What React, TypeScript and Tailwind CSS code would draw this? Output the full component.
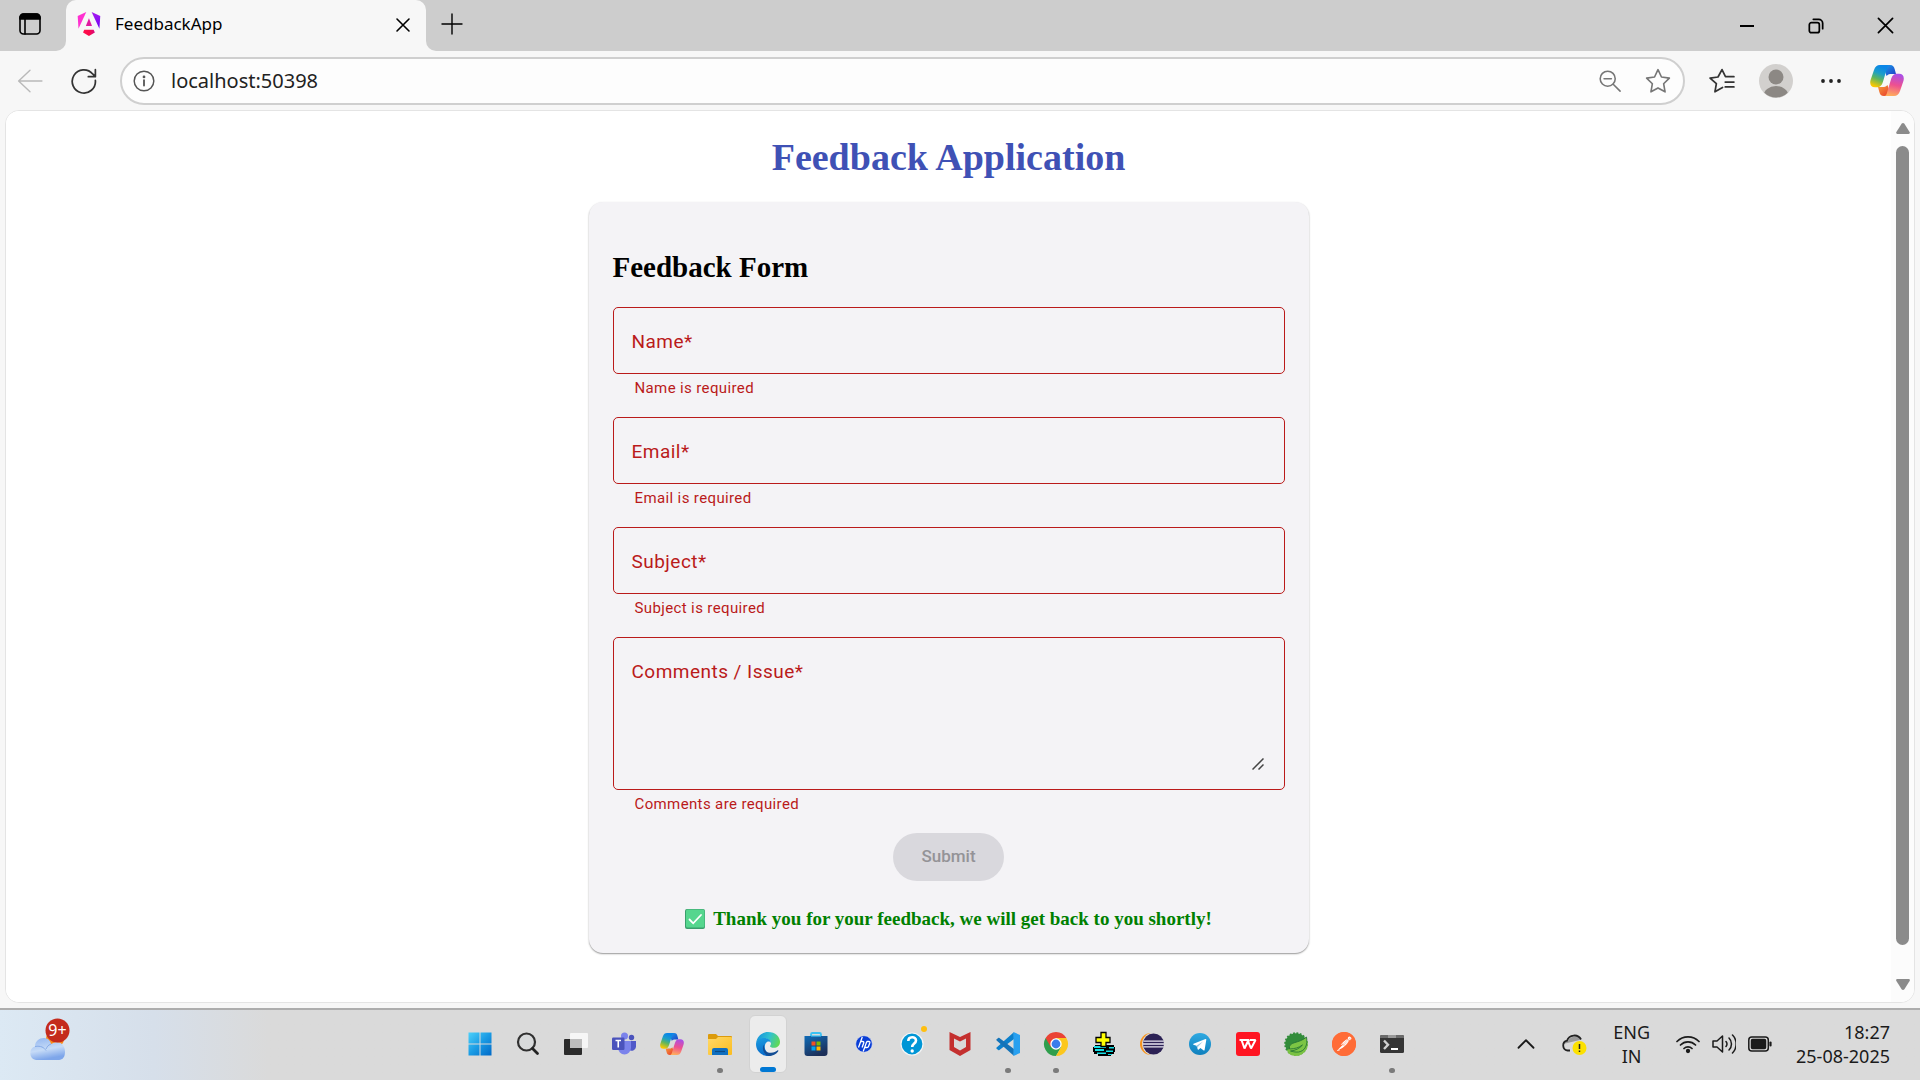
import type { ReactNode } from "react";
import { SiPostman } from "react-icons/si";

function AngularLogo() {
  return (
    <svg viewBox="0 0 223 236" className="h-6 w-6 shrink-0" aria-hidden="true">
      <defs>
        <linearGradient id="ngWing" x1="0" y1="0" x2="0" y2="1">
          <stop offset="0" stopColor="#a81bf0" />
          <stop offset="1" stopColor="#6c00f5" />
        </linearGradient>
        <linearGradient id="ngBase" x1="0" y1="0" x2="1" y2="0">
          <stop offset="0" stopColor="#ff0f4f" />
          <stop offset="0.5" stopColor="#fb0a48" />
          <stop offset="1" stopColor="#d60a80" />
        </linearGradient>
      </defs>
      <path d="M222.077 39.192l-8.019 125.923L137.387 0z" fill="url(#ngWing)" />
      <path d="M168.972 202.017l-57.933 33.056-57.934-33.056 11.783-28.556h92.301z" fill="url(#ngBase)" />
      <path d="M111.039 62.675l30.357 73.803H80.681z" fill="#e01aa0" />
      <path d="M7.937 165.115L0 39.192 84.69 0z" fill="#ff31d0" />
    </svg>
  );
}

function CopilotLogo({ id, className }: { id: string; className: string }) {
  return (
    <svg viewBox="0 0 34 31" className={className} aria-hidden="true">
      <defs>
        <linearGradient id={`${id}a`} x1="0.7" y1="0" x2="0.35" y2="1">
          <stop offset="0.1" stopColor="#0a86e8" />
          <stop offset="0.4" stopColor="#1c9fc8" />
          <stop offset="0.65" stopColor="#5cb560" />
          <stop offset="1" stopColor="#fbc800" />
        </linearGradient>
        <linearGradient id={`${id}b`} x1="0.6" y1="0" x2="0.4" y2="1">
          <stop offset="0" stopColor="#a94fe8" />
          <stop offset="0.5" stopColor="#ee5090" />
          <stop offset="1" stopColor="#ffae5c" />
        </linearGradient>
        <linearGradient id={`${id}c`} x1="0" y1="0" x2="1" y2="1">
          <stop offset="0" stopColor="#1aa2ee" />
          <stop offset="1" stopColor="#1f3bc4" />
        </linearGradient>
        <linearGradient id={`${id}d`} x1="0" y1="0" x2="1" y2="1">
          <stop offset="0" stopColor="#f6a03a" />
          <stop offset="1" stopColor="#e8322c" />
        </linearGradient>
      </defs>
      <path d="M13 0h7c3 0 4 1.500 4.800 4.500L26 9h-4c-2.500 0-4 .2-5.500 2z" fill={`url(#${id}c)`} />
      <path d="M21 31h-7c-3 0-4-1.500-4.800-4.500L8 22h4c2.500 0 4-.2 5.500-2z" fill={`url(#${id}d)`} />
      <path d="M10 0h10c-2 0-2.500 1.500-3.200 4L13.200 16c-1.300 4.500-3 6.300-6.500 6.300H5c-4 0-5.500-3-4.500-7L4 5c1.200-3.500 3-5 6-5z" fill={`url(#${id}a)`} />
      <path d="M24 31H14c2 0 2.500-1.500 3.200-4L20.800 15c1.300-4.500 3-6.300 6.500-6.300H29c4 0 5.500 3 4.500 7L30 26c-1.200 3.500-3 5-6 5z" fill={`url(#${id}b)`} />
    </svg>
  );
}

function Line({ size, children, width = 1.3 }: { size: string; children: ReactNode; width?: number }) {
  return (
    <svg
      viewBox="0 0 24 24"
      className={size}
      fill="none"
      stroke="currentColor"
      strokeWidth={width}
      strokeLinecap="round"
      strokeLinejoin="round"
      aria-hidden="true"
    >
      {children}
    </svg>
  );
}

function TabStrip() {
  return (
    <header className="flex h-[51px] shrink-0 bg-[#cdcdcd] text-black">
      <div className="flex w-[66px] items-center bg-[#f7f7f7]">
        <div className="flex h-full w-full items-center rounded-br-[10px] bg-[#cdcdcd] pb-1 pl-[18px]">
          <button aria-label="Tab actions">
            <Line size="size-6" width={1.6}>
              <rect x="2" y="2" width="20" height="20" rx="3.500" />
              <path d="M2 7V5.500A3.500 3.500 0 0 1 5.500 2h13A3.500 3.500 0 0 1 22 5.500V7z" fill="currentColor" />
              <path d="M7 7v15" />
            </Line>
          </button>
        </div>
      </div>
      <div className="bg-[#cdcdcd]">
        <div className="flex h-full w-[360px] items-center rounded-t-[10px] bg-[#f7f7f7] pr-[11px] pb-1 pl-[11px]">
          <AngularLogo />
          <span className="ml-[14px] flex-1 text-[17px]">FeedbackApp</span>
          <button aria-label="Close tab" className="mt-0.5 p-1">
            <Line size="size-4" width={2.4}>
              <path d="M3 3l18 18M21 3L3 21" />
            </Line>
          </button>
        </div>
      </div>
      <div className="flex flex-1 bg-[#f7f7f7]">
        <div className="flex flex-1 items-center rounded-bl-[10px] bg-[#cdcdcd] pl-[14px]">
          <button aria-label="New tab" className="mb-1">
            <Line size="size-6" width={1.4}>
              <path d="M12 2v20M2 12h20" />
            </Line>
          </button>
          <div className="ml-auto flex items-center pr-[26px]">
            <button aria-label="Minimize" className="mr-[53px]">
              <Line size="size-4" width={3}>
                <path d="M1.500 12h21" strokeLinecap="butt" />
              </Line>
            </button>
            <button aria-label="Restore" className="mr-[53px]">
              <Line size="size-4" width={2.6}>
                <rect x="2" y="7" width="15" height="15" rx="3" />
                <path d="M8 2h8a6 6 0 0 1 6 6v8" />
              </Line>
            </button>
            <button aria-label="Close">
              <Line size="size-[17px]" width={2.4}>
                <path d="M2 2l20 20M22 2L2 22" />
              </Line>
            </button>
          </div>
        </div>
      </div>
    </header>
  );
}

const starPath = "M12 1.500l3.200 6.800 7.300 1-5.300 5.200 1.300 7.500L12 18.400 5.500 22l1.300-7.500L1.500 9.300l7.300-1z";

function Toolbar() {
  return (
    <div className="flex h-[59px] shrink-0 items-center bg-[#f7f7f7] pr-4 pl-[17px] text-[#333]">
      <button aria-label="Back" className="text-[#b9b9b9]">
        <Line size="size-[26px]">
          <path d="M23 12H2M12 2L1.500 12 12 22" />
        </Line>
      </button>
      <button aria-label="Refresh" className="ml-7">
        <Line size="size-[26px]" width={1.6}>
          <path d="M22.500 11.500A10.700 10.700 0 1 1 20 5.500l2.200 2.200M22.500 1.500v6.500H16" />
        </Line>
      </button>
      <div className="ml-[23px] flex h-12 flex-1 items-center rounded-full border-2 border-[#cfcfcf] bg-[#fdfdfd] pr-3 pl-[11px]">
        <button aria-label="Site information" className="text-[#555]">
          <Line size="size-[22px]" width={1.6}>
            <circle cx="12" cy="12" r="10.700" />
            <path d="M12 11v6" strokeWidth="2" />
            <circle cx="12" cy="7.500" r="0.700" fill="currentColor" />
          </Line>
        </button>
        <input
          aria-label="Address"
          defaultValue="localhost:50398"
          className="ml-4 min-w-0 flex-1 bg-transparent text-[20px] text-[#222] outline-none"
        />
        <button aria-label="Zoom" className="text-[#767676]">
          <Line size="size-[22px]" width={1.7}>
            <circle cx="9.500" cy="9.500" r="8.200" />
            <path d="M5.500 9.500h8M15.500 15.500l7.500 7.500" />
          </Line>
        </button>
        <button aria-label="Add to favorites" className="ml-6 text-[#767676]">
          <Line size="size-[26px]" width={1.5}>
            <path d={starPath} />
          </Line>
        </button>
      </div>
      <button aria-label="Favorites" className="ml-6">
        <Line size="size-[26px]" width={1.6}>
          <path d="M12.500 18L5.500 22l1.300-7.500L1 9.300l7.300-1L12 1.500l3.200 6.500H23M15 13h8M15 17.500h8" />
        </Line>
      </button>
      <button aria-label="Profile" className="ml-6">
        <svg viewBox="0 0 34 34" className="size-[34px]" aria-hidden="true">
          <defs>
            <clipPath id="avatarClip">
              <circle cx="17" cy="17" r="16.500" />
            </clipPath>
          </defs>
          <circle cx="17" cy="17" r="17" fill="#d2d0ce" />
          <g clipPath="url(#avatarClip)" fill="#8c8884">
            <circle cx="17" cy="13" r="7.500" />
            <ellipse cx="17" cy="32" rx="12.500" ry="10" />
          </g>
        </svg>
      </button>
      <button aria-label="Settings and more" className="ml-7 text-[#222]">
        <svg viewBox="0 0 20 4" className="h-1 w-5" fill="currentColor" aria-hidden="true">
          <circle cx="2" cy="2" r="1.900" />
          <circle cx="10" cy="2" r="1.900" />
          <circle cx="18" cy="2" r="1.900" />
        </svg>
      </button>
      <button aria-label="Copilot" className="ml-[29px]">
        <CopilotLogo id="cpTool" className="h-[31px] w-[34px]" />
      </button>
    </div>
  );
}

function Field({ id, label, error, multiline }: { id: string; label: string; error: string; multiline?: boolean }) {
  return (
    <div className="mb-[15px]">
      <div className="relative grid rounded-[5px] border border-[#ba1a1a]">
        <label
          htmlFor={id}
          className="pointer-events-none col-start-1 row-start-1 px-[18px] pt-[22px] text-[19px] leading-6 tracking-wide text-[#ba1a1a]"
        >
          {label}*
        </label>
        {multiline ? (
          <>
            <textarea
              id={id}
              rows={4}
              className="col-start-1 row-start-1 h-[151px] resize-none bg-transparent px-[18px] pt-[22px] text-[19px] leading-6 outline-none"
            />
            <svg
              viewBox="0 0 12 12"
              className="absolute right-5 bottom-[19px] size-3"
              stroke="#444"
              strokeWidth="1.500"
              aria-hidden="true"
            >
              <path d="M0.500 11.500l11-11M6.500 11.500l5-5" />
            </svg>
          </>
        ) : (
          <input
            id={id}
            className="col-start-1 row-start-1 h-[65px] bg-transparent px-[18px] text-[19px] outline-none"
          />
        )}
      </div>
      <p className="px-[22px] text-[15px] leading-7 tracking-wide text-[#ba1a1a]">{error}</p>
    </div>
  );
}

function FeedbackPage() {
  return (
    <main className="flex min-w-0 flex-1 flex-col items-center overflow-hidden bg-white pt-[23px]">
      <h1 className="font-['Liberation_Serif',serif] text-[38px] leading-[46px] font-bold text-[#3f51b5]">
        Feedback Application
      </h1>
      <form className="mt-[22px] w-full max-w-[720px] rounded-[14px] bg-[#f4f3f6] px-6 pt-[47px] pb-[22px] font-[Roboto,sans-serif] shadow-[0_1px_2px_#0000004d,0_1px_1px_#00000024]">
        <h2 className="mb-[22px] font-['Liberation_Serif',serif] text-[29px] leading-9 font-bold text-black">
          Feedback Form
        </h2>
        <Field id="name" label="Name" error="Name is required" />
        <Field id="email" label="Email" error="Email is required" />
        <Field id="subject" label="Subject" error="Subject is required" />
        <Field id="comments" label="Comments / Issue" error="Comments are required" multiline />
        <div className="flex justify-center">
          <button
            type="submit"
            disabled
            className="h-12 rounded-full bg-[#d9d8dd] px-7 text-[17px] font-medium text-[#949397]"
          >
            Submit
          </button>
        </div>
        <p className="mt-[26px] flex items-center justify-center gap-2 font-['Liberation_Serif',serif] text-[19px] leading-6 font-bold text-[#008000]">
          <svg viewBox="0 0 20 20" className="size-5" aria-hidden="true">
            <rect width="20" height="20" rx="2" fill="#3a9e6c" />
            <rect x="1" y="0.500" width="18.500" height="18" rx="1.500" fill="#55d68e" />
            <path d="M4.500 10.500l3.700 3.800L16 6" fill="none" stroke="#fff" strokeWidth="1.800" strokeLinecap="round" />
          </svg>
          Thank you for your feedback, we will get back to you shortly!
        </p>
      </form>
    </main>
  );
}

function Scrollbar() {
  return (
    <div className="flex w-[23px] shrink-0 flex-col items-center bg-[#fcfcfc] py-3" aria-hidden="true">
      <svg viewBox="0 0 14 11" className="h-[11px] w-[14px]" fill="#8b8b8b">
        <path d="M7 0c.6 0 1 .3 1.400.8l5.200 8.200c.6 1 .1 2-1 2H1.400c-1.100 0-1.600-1-1-2L5.600.8C6 .3 6.400 0 7 0z" />
      </svg>
      <div className="mt-3 mb-[34px] w-[13px] flex-1 rounded-full bg-[#8b8b8b]" />
      <svg viewBox="0 0 14 11" className="h-[11px] w-[14px]" fill="#8b8b8b">
        <path d="M7 11c.6 0 1-.3 1.400-.8l5.200-8.200c.6-1 .1-2-1-2H1.400C.3 0-.2 1 .4 2l5.200 8.200c.4.500.8.800 1.400.8z" />
      </svg>
    </div>
  );
}

function Icon({ children }: { children: ReactNode }) {
  return (
    <svg viewBox="0 0 24 24" className="size-6 overflow-visible" aria-hidden="true">
      {children}
    </svg>
  );
}

type App = { name: string; icon: ReactNode; running?: boolean; active?: boolean };

const apps: App[] = [
  {
    name: "Start",
    icon: (
      <Icon>
        <defs>
          <linearGradient id="win" x1="0" y1="0" x2="24" y2="24" gradientUnits="userSpaceOnUse">
            <stop offset="0" stopColor="#4fd3fb" />
            <stop offset="0.500" stopColor="#1a9be4" />
            <stop offset="1" stopColor="#0067c6" />
          </linearGradient>
        </defs>
        <path d="M.5.500h11v11H.5zM12.500.500h11v11h-11zM.5 12.500h11v11H.5zM12.500 12.500h11v11h-11z" fill="url(#win)" />
      </Icon>
    ),
  },
  {
    name: "Search",
    icon: (
      <Icon>
        <circle cx="10.500" cy="10" r="8.500" fill="#d8dadb" stroke="#303030" strokeWidth="2.200" />
        <path d="M16.500 16.500l5 5" stroke="#222" strokeWidth="2.800" strokeLinecap="round" />
      </Icon>
    ),
  },
  {
    name: "Task view",
    icon: (
      <Icon>
        <rect x="0" y="7" width="18" height="16" rx="1" fill="#2b2b2b" />
        <rect x="6" y="1" width="18" height="15" rx="1" fill="#f6f6f6" />
        <rect x="6" y="7" width="12" height="9" fill="#bdbdbd" />
      </Icon>
    ),
  },
  {
    name: "Teams",
    icon: (
      <Icon>
        <circle cx="19.500" cy="5.500" r="2.700" fill="#4b53bc" />
        <circle cx="12.500" cy="4" r="3.500" fill="#7b83eb" />
        <path d="M17 9h7v6a4.500 4.500 0 0 1-7 3z" fill="#5059c9" />
        <path d="M6 9h13v7a6.500 6.500 0 0 1-13 0z" fill="#7b83eb" />
        <rect x="0" y="5.500" width="12.500" height="12.500" rx="1.200" fill="#4b53bc" />
        <path d="M3.500 8.500h5.500M6.250 8.500v7" stroke="#fff" strokeWidth="1.600" />
      </Icon>
    ),
  },
  { name: "Copilot", icon: <CopilotLogo id="cpTask" className="h-[22px] w-6" /> },
  {
    name: "File Explorer",
    running: true,
    icon: (
      <Icon>
        <defs>
          <linearGradient id="folder" x1="0" y1="0" x2="1" y2="1">
            <stop offset="0" stopColor="#ffd968" />
            <stop offset="1" stopColor="#fbbc1f" />
          </linearGradient>
        </defs>
        <path d="M0 3a1 1 0 0 1 1-1h7l2 2h13a1 1 0 0 1 1 1v3H0z" fill="#dc9b0c" />
        <path d="M0 7h8l2-2h13a1 1 0 0 1 1 1v16a1 1 0 0 1-1 1H1a1 1 0 0 1-1-1z" fill="url(#folder)" />
        <path d="M4 23v-5a2 2 0 0 1 2-2h12a2 2 0 0 1 2 2v5z" fill="#0f6fc0" />
        <path d="M7 19.500h10" stroke="#0a4a86" strokeWidth="1.200" />
      </Icon>
    ),
  },
  {
    name: "Microsoft Edge",
    active: true,
    icon: (
      <Icon>
        <defs>
          <linearGradient id="edgeTop" x1="0" y1="0.300" x2="1" y2="0.600">
            <stop offset="0" stopColor="#1793dc" />
            <stop offset="0.500" stopColor="#30c1d0" />
            <stop offset="1" stopColor="#62da50" />
          </linearGradient>
          <linearGradient id="edgeLeft" x1="0.300" y1="0" x2="0.500" y2="1">
            <stop offset="0" stopColor="#1a9be0" />
            <stop offset="1" stopColor="#0868c8" />
          </linearGradient>
        </defs>
        <path d="M.3 10.500C1 4.500 6 0 12 0c7.500 0 12 5 12 9.800 0 4-3 6-6 6-2.500 0-4-.8-4-1.600 0-.6 1-1.200 1-3C15 8 11.500 6.500 8.500 6.500 4.500 6.500 1.500 8.500.3 10.500z" fill="url(#edgeTop)" />
        <path d="M0 12C.2 8 4 6 8 6c4.500 0 7 2.500 7 5-1-1.300-2.500-1.800-4-1-3 1.500-4 10 4.500 13.500-9 2-15.500-4-15.500-11.500z" fill="url(#edgeLeft)" />
        <path d="M8.200 12.500C7 18 11 21 15 20.800c3 0 5-1.300 6.300-2.300.8-.5 1.300 0 .9.700C20.500 22 16.500 24 12.500 24 7 22 5.500 15.500 8.200 12.500z" fill="#134d94" />
      </Icon>
    ),
  },
  {
    name: "Microsoft Store",
    icon: (
      <Icon>
        <defs>
          <linearGradient id="store" x1="0" y1="0" x2="0.500" y2="1">
            <stop offset="0" stopColor="#0f6cb8" />
            <stop offset="1" stopColor="#1c2f59" />
          </linearGradient>
        </defs>
        <path d="M7 6V2.500A1.500 1.500 0 0 1 8.500 1h7A1.500 1.500 0 0 1 17 2.500V6" fill="none" stroke="#39c2f3" strokeWidth="1.800" />
        <path d="M.5 4h23v17a3 3 0 0 1-3 3h-17a3 3 0 0 1-3-3z" fill="url(#store)" />
        <path d="M7 4h10" stroke="#39c2f3" strokeWidth="1.200" />
        <path d="M7.500 9.500h4v4h-4z" fill="#f25022" />
        <path d="M12.500 9.500h4v4h-4z" fill="#7fba00" />
        <path d="M7.500 14.500h4v4h-4z" fill="#00a4ef" />
        <path d="M12.500 14.500h4v4h-4z" fill="#ffb900" />
      </Icon>
    ),
  },
  {
    name: "HP",
    icon: (
      <Icon>
        <circle cx="12" cy="12" r="8.300" fill="#0a3ed6" stroke="#e8e8ee" strokeWidth="0.600" />
        <path d="M10.300 5L6.500 15.500M8.700 9.500h2c1 0 1.300.6 1 1.500l-1.600 4.500M14.800 9.500L11.200 19.500M14.800 9.500h2c1 0 1.200.6 1 1.300l-1.200 3.400c-.3.900-.8 1.300-1.700 1.300h-1.900" fill="none" stroke="#fff" strokeWidth="1.300" />
      </Icon>
    ),
  },
  {
    name: "HP Support Assistant",
    icon: (
      <Icon>
        <circle cx="12" cy="12" r="11" fill="#0096d6" stroke="#f5f5f5" strokeWidth="1.200" />
        <path d="M8.300 9c0-5 7.700-5 7.700-.5 0 3-3.800 3-3.800 6.500" fill="none" stroke="#fff" strokeWidth="2.600" />
        <circle cx="12.200" cy="19" r="1.700" fill="#fff" />
        <circle cx="24" cy="-3" r="3" fill="#ffbf10" />
      </Icon>
    ),
  },
  {
    name: "McAfee",
    icon: (
      <Icon>
        <path d="M1.500 0L12 5 22.500 0v18L12 24 1.500 18zM6 6.500V15l6 3.500 6-3.500V6.500l-6 3z" fill="#c4302f" fillRule="evenodd" />
      </Icon>
    ),
  },
  {
    name: "Visual Studio Code",
    running: true,
    icon: (
      <Icon>
        <path d="M17.500.300L2.200 14.600a1 1 0 0 1-1.400 0L.4 14.200a1 1 0 0 1 0-1.500L17.500.300 18 7 4.800 17.200a1 1 0 0 1-1.300 0L.4 15.500z" fill="none" />
        <path d="M17.800.200L.6 15.600a.8.800 0 0 0 0 1.200l1.600 1.300c.4.300.8.300 1.200 0L18 7z" fill="#0c80cc" />
        <path d="M17.800 23.800L.6 8.400a.8.800 0 0 1 0-1.200l1.600-1.300c.4-.3.800-.3 1.200 0L18 17z" fill="#1473b8" />
        <path d="M17.500.100L24 3v18l-6.500 2.900z" fill="#28a0f0" />
      </Icon>
    ),
  },
  {
    name: "Google Chrome",
    running: true,
    icon: (
      <Icon>
        <path d="M12 12L1.600 6A12 12 0 0 0 12 24l5.200-9z" fill="#2f9e4c" />
        <path d="M12 6h10.400A12 12 0 0 1 12 24l5.200-9z" fill="#fcc71e" />
        <path d="M12 6h10.400A12 12 0 0 0 1.600 6l5.200 9z" fill="#ea4335" />
        <circle cx="12" cy="12" r="5.700" fill="#fff" />
        <circle cx="12" cy="12" r="4.400" fill="#3a7cec" />
      </Icon>
    ),
  },
  {
    name: "Drive tool",
    icon: (
      <Icon>
        <path d="M3 13h19v2h1v5h-1v2h-3v2H6v-2H2v-2H1v-5h2z" fill="#000" />
        <path d="M2 14h12v2H2zM3 17h9v2H3zM14 18.500h7V20h-7zM5 20.500h9V22H5zM17 15h5v1.500h-5zM16 22h4v1h-4z" fill="#16dfe6" />
        <path d="M9 .5h5v5h4v5h-4v4H9v-4H4v-5h5z" fill="#ff0" stroke="#000" strokeWidth="1.300" />
      </Icon>
    ),
  },
  {
    name: "Eclipse",
    icon: (
      <Icon>
        <circle cx="11" cy="12" r="11" fill="#f7941e" />
        <circle cx="13.300" cy="12" r="11.200" fill="#dcdcdc" />
        <circle cx="13.500" cy="12" r="10.500" fill="#2c2255" />
        <path d="M3.500 9.200h20.300M3 12h21M3.500 14.800h20.300" stroke="#e9e8f2" strokeWidth="1.300" />
      </Icon>
    ),
  },
  {
    name: "Telegram",
    icon: (
      <Icon>
        <defs>
          <linearGradient id="tg" x1="0" y1="0" x2="0" y2="1">
            <stop offset="0" stopColor="#2fa9e1" />
            <stop offset="1" stopColor="#0f80bd" />
          </linearGradient>
        </defs>
        <circle cx="12" cy="12" r="11" fill="url(#tg)" />
        <path d="M17.500 7L5.500 11.800c-.5.200-.5.700 0 .9l3 1 1.300 3.700c.2.500.6.500.9.200l1.700-1.500 3.300 2.300c.4.200.8.100.9-.4L18.300 7.700c.1-.5-.3-.9-.8-.7z" fill="#fff" />
        <path d="M8.700 13.600L15 9.500l-4.800 4.900-.4 2.600z" fill="#9cc9e3" />
      </Icon>
    ),
  },
  {
    name: "WPS Office",
    icon: (
      <Icon>
        <rect width="24" height="24" rx="3" fill="#ff1522" />
        <path d="M3.500 8h9.500l-1.500 4M5.500 8l3 8.500 3.500-7.500 3 7.500L19.500 8H14" fill="none" stroke="#fff" strokeWidth="2" strokeLinejoin="bevel" />
      </Icon>
    ),
  },
  {
    name: "Spring Tools",
    icon: (
      <Icon>
        <circle cx="12" cy="12" r="10.800" fill="#328c3a" stroke="#328c3a" strokeWidth="2" strokeDasharray="1.800 1.600" />
        <path d="M23.500 9a12 12 0 0 1-19 12.500L3 18z" fill="#79c142" />
        <path d="M22.500 5c1.500 8-1.500 14-8 15-3.500.4-6-.5-8-1 5-.5 9-2.500 12-6-4 2.800-7.500 3.700-13 4C4 9 15 12 22.500 5z" fill="#7cc544" stroke="#1f6e35" strokeWidth="0.800" />
      </Icon>
    ),
  },
  {
    name: "Postman",
    icon: (
      <span className="flex size-6 rounded-full bg-[radial-gradient(#fff_55%,#ff6c37_60%)] text-[#ff6c37]">
        <SiPostman className="size-6" aria-hidden="true" />
      </span>
    ),
  },
  {
    name: "Terminal",
    running: true,
    icon: (
      <Icon>
        <rect x="0" y="3" width="24" height="18" rx="1.500" fill="#353535" />
        <path d="M0 6V4.500A1.500 1.500 0 0 1 1.500 3h21A1.500 1.500 0 0 1 24 4.500V6z" fill="#6b6b6b" />
        <path d="M8 3h8v3H8z" fill="#999" />
        <path d="M4 8.500l4 4.200L4 17" fill="none" stroke="#d0d0d0" strokeWidth="2.400" />
        <path d="M11 17h7" stroke="#fff" strokeWidth="2" />
      </Icon>
    ),
  },
];

function AppButton({ app }: { app: App }) {
  return (
    <button aria-label={app.name} className="flex w-12 items-start justify-center pt-[5px]">
      <span
        className={
          app.active
            ? "relative flex h-[58px] w-[38px] items-center justify-center rounded-md border border-[#d2d2d2] bg-[#ececec]"
            : "relative flex h-[58px] w-[38px] items-center justify-center"
        }
      >
        {app.icon}
        {app.active && <span className="absolute bottom-0 h-[5px] w-4 rounded-full bg-[#0078d4]" />}
        {app.running && <span className="absolute bottom-0 h-[5px] w-1.5 rounded-full bg-[#7b7b7b]" />}
      </span>
    </button>
  );
}

function Taskbar() {
  return (
    <footer className="flex h-[72px] shrink-0 border-t-2 border-[#adadad] bg-[#dadada] bg-linear-to-r from-[#dce9f4] from-0% via-[#d6dfea] via-8% to-[#dadada] to-14% pr-1 text-[#1b1b1b]">
      <div className="flex flex-9 items-start pt-2 pl-[29px]">
        <button aria-label="Weather">
          <svg viewBox="0 0 41 43" className="h-[43px] w-[41px]" aria-hidden="true">
            <defs>
              <linearGradient id="cloud" x1="0" y1="0" x2="0.300" y2="1">
                <stop offset="0" stopColor="#90b4f0" />
                <stop offset="0.600" stopColor="#c6dbf7" />
                <stop offset="1" stopColor="#7ea6ea" />
              </linearGradient>
            </defs>
            <circle cx="26" cy="21" r="9" fill="#f98a1c" />
            <path d="M7 42a7 7 0 0 1-1-13.500C6 18 21 17 22 26c9-5 14 1 14 8s-4 8-7 8z" fill="url(#cloud)" />
            <path d="M6 28.500c6-1 9 1 11 4M22 26c-3 1-4 3-5 5" fill="none" stroke="#86abe8" strokeWidth="1" />
            <circle cx="28.500" cy="12.500" r="12" fill="#c42b1c" />
            <text x="28.500" y="18" textAnchor="middle" fill="#fff" fontSize="16" fontFamily="Noto Sans, sans-serif">
              9+
            </text>
          </svg>
        </button>
      </div>
      <nav className="flex" aria-label="Taskbar">
        {apps.map((app) => (
          <AppButton key={app.name} app={app} />
        ))}
      </nav>
      <div className="flex flex-10 items-center justify-end pr-[26px] pb-0.5 text-[18px] leading-6">
        <button aria-label="Show hidden icons" className="mr-[26px]">
          <Line size="size-[18px]" width={2.4}>
            <path d="M2 17L12 7l10 10" />
          </Line>
        </button>
        <button aria-label="OneDrive" className="mr-[26px]">
          <svg viewBox="0 0 26 22" className="h-[22px] w-[26px]" aria-hidden="true">
            <path d="M2 11c1-3 3.500-3.500 5-3 2-5 10-6 12-1z" fill="#999" />
            <path d="M9 17.500H6.500a5 5 0 0 1-.5-9.800C8 1.500 17 .5 20 6.500" fill="none" stroke="#222" strokeWidth="1.800" />
            <circle cx="18.500" cy="15" r="7" fill="#fce100" />
            <path d="M18.500 11v5M18.500 17.500v1.500" stroke="#222" strokeWidth="1.500" />
          </svg>
        </button>
        <button className="mr-[26px] text-center">
          ENG
          <br />
          IN
        </button>
        <button aria-label="Network, volume and battery" className="mr-6 flex items-center gap-3">
          <Line size="size-6" width={1.7}>
            <path d="M1 9.500a15.500 15.500 0 0 1 22 0M4.500 13a10.600 10.600 0 0 1 15 0M8 16.500a5.700 5.700 0 0 1 8 0" />
            <circle cx="12" cy="19" r="1.300" fill="currentColor" />
          </Line>
          <Line size="size-6" width={1.5}>
            <path d="M1 9v6h4l5.500 5V4L5 9zM14 9.500a4 4 0 0 1 0 5M17 6a8.500 8.500 0 0 1 0 12M20.500 3a13 13 0 0 1 0 18" />
          </Line>
          <Line size="size-6" width={1.5}>
            <rect x="0.800" y="5" width="19.500" height="14" rx="3" />
            <rect x="3.500" y="7.500" width="14" height="9" rx="1" fill="currentColor" />
            <path d="M22.500 10.500v3" strokeWidth="2.200" />
          </Line>
        </button>
        <button className="text-right">
          18:27
          <br />
          25-08-2025
        </button>
      </div>
    </footer>
  );
}

export default function App() {
  return (
    <div className="flex min-h-screen flex-col bg-[#f7f7f7] font-['Noto_Sans','Open_Sans',sans-serif]">
      <TabStrip />
      <Toolbar />
      <div className="mx-[5px] mb-[5px] flex flex-1 overflow-hidden rounded-[14px] border border-[#e4e4e4] bg-white">
        <FeedbackPage />
        <Scrollbar />
      </div>
      <Taskbar />
    </div>
  );
}
